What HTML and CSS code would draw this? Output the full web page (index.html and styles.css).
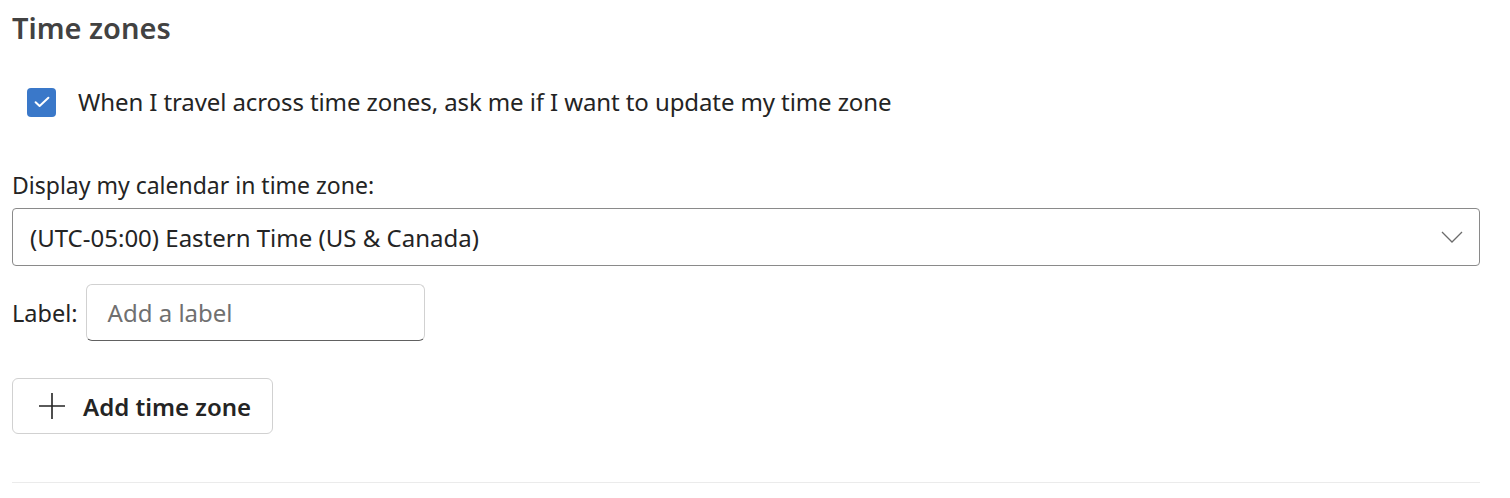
FILE: index.html
```html
<!DOCTYPE html>
<html lang="en">
<head>
<meta charset="utf-8">
<title>Time zones</title>
<link rel="stylesheet" href="styles.css">
</head>
<body>
<section class="panel">
  <h2 class="title">Time zones</h2>
  <label class="check-row">
    <span class="checkbox">
      <svg viewBox="0 0 16 12" width="16" height="12"><path d="M1.6 6.2 L5.6 10 L14.4 1.8" fill="none" stroke="#fff" stroke-width="2" stroke-linecap="round" stroke-linejoin="round"/></svg>
    </span>
    <span class="check-text">When I travel across time zones, ask me if I want to update my time zone</span>
  </label>
  <div class="field-label">Display my calendar in time zone:</div>
  <div class="select">
    <span class="select-value">(UTC-05:00) Eastern Time (US &amp; Canada)</span>
    <svg class="chevron" viewBox="0 0 22 12" width="22" height="12"><path d="M1 1 L11 11 L21 1" fill="none" stroke="#6b6b6b" stroke-width="1.3"/></svg>
  </div>
  <div class="label-row">
    <span class="label-text">Label:</span>
    <div class="input"><span class="placeholder">Add a label</span></div>
  </div>
  <button class="add-btn">
    <svg viewBox="0 0 28 28" width="28" height="28"><path d="M14 1 V27 M1 14 H27" stroke="#242424" stroke-width="1.6" fill="none"/></svg>
    <span>Add time zone</span>
  </button>
  <div class="divider"></div>
</section>
</body>
</html>
```
FILE: styles.css
```css
html, body { margin: 0; padding: 0; background: #fff; }
body { font-family: "Noto Sans", "Open Sans", sans-serif; color: #242424; }
.panel { padding: 0 30px 0 12px; display: flex; flex-direction: column; }
.title { margin: 8px 0 0 0; font-size: 29px; font-weight: 600; color: #424242; line-height: 40px; }
.check-row { display: flex; align-items: center; gap: 22px; margin: 38px 0 0 15px; height: 32px; }
.checkbox { width: 29px; height: 29px; border-radius: 4px; background: #3a78c9; display: flex; align-items: center; justify-content: center; flex: none; }
.check-text { font-size: 24px; line-height: 32px; letter-spacing: -0.1px; }
.field-label { font-size: 23px; line-height: 30px; margin-top: 52px; }
.select { margin-top: 8px; height: 56px; border: 1px solid #8a8a8a; border-radius: 4px; display: flex; align-items: center; justify-content: space-between; padding: 0 16px 0 17px; }
.select-value { font-size: 24px; }
.label-row { display: flex; align-items: center; gap: 8px; margin-top: 18px; }
.label-text { font-size: 23.5px; }
.input { width: 339px; height: 57px; border: 1px solid #d1d1d1; border-bottom-color: #616161; border-radius: 6px; display: flex; align-items: center; padding-left: 21px; box-sizing: border-box; }
.placeholder { font-size: 24px; color: #707070; }
.add-btn { align-self: flex-start; margin-top: 37px; height: 56px; width: 261px; box-sizing: border-box; border: 1px solid #d1d1d1; border-radius: 6px; background: #fff; display: flex; align-items: center; gap: 17px; padding: 0 0 0 25px; font-family: inherit; font-size: 24px; font-weight: 600; color: #242424; }
.divider { margin-top: 48px; height: 1px; background: #ebebeb; }
```
